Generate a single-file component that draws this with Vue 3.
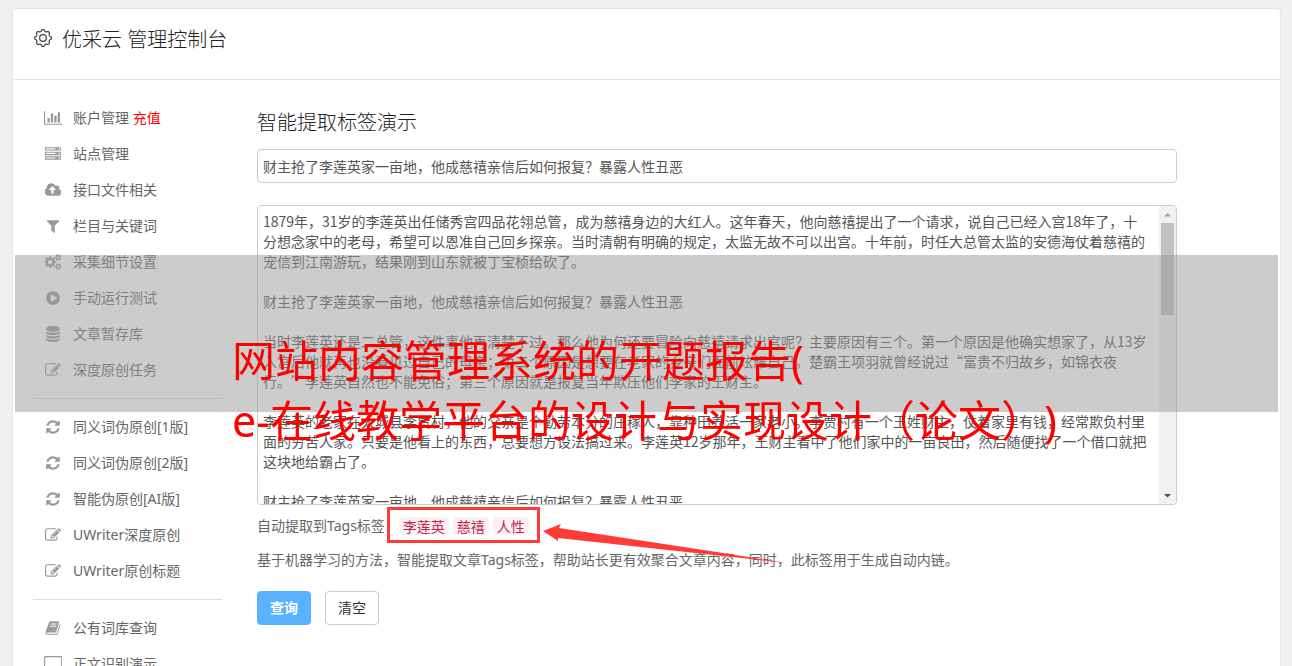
<script setup>
import { ref } from 'vue'

const icons = {
  chart: { w: 2048, d: 'M640 896v512h-256v-512h256zm384-512v1024h-256v-1024h256zm1024 1152v128h-2048v-1536h128v1408h1920zm-640-896v768h-256v-768h256zm384-384v1152h-256v-1152h256z' },
  server: { w: 1792, d: 'M128 1408h1024v-128h-1024v128zm0-512h1024v-128h-1024v128zm1568 448q0-40-28-68t-68-28-68 28-28 68 28 68 68 28 68-28 28-68zm-1568-960h1024v-128h-1024v128zm1568 448q0-40-28-68t-68-28-68 28-28 68 28 68 68 28 68-28 28-68zm0-512q0-40-28-68t-68-28-68 28-28 68 28 68 68 28 68-28 28-68zm96 832v384h-1792v-384h1792zm0-512v384h-1792v-384h1792zm0-512v384h-1792v-384h1792z' },
  upload: { w: 1856, d: 'M1216 864q0-14-9-23l-352-352q-9-9-23-9t-23 9l-351 351q-10 12-10 24 0 14 9 23t23 9h224v352q0 13 9.5 22.5t22.5 9.5h192q13 0 22.5-9.5t9.5-22.5v-352h224q13 0 22.5-9.5t9.5-22.5zm640 288q0 159-112.5 271.5t-271.5 112.5h-1088q-185 0-316.5-131.5t-131.5-316.5q0-130 70-240t188-165q-2-30-2-43 0-212 150-362t362-150q156 0 285.5 87t188.5 231q71-62 166-62 106 0 181 75t75 181q0 76-41 138 130 31 213.5 135.5t83.5 238.5z' },
  filter: { w: 1792, d: 'M1595 295q17 41-14 70l-493 493v742q0 42-39 59-13 5-25 5-27 0-45-19l-256-256q-19-19-19-45v-486l-493-493q-31-29-14-70 17-39 59-39h1280q42 0 59 39z' },
  cogs: { w: 1856, d: 'M832 896q0-106-75-181t-181-75-181 75-75 181 75 181 181 75 181-75 75-181zm768 512q0-52-38-90t-90-38-90 38-38 90q0 53 37.5 90.5t90.5 37.5 90.5-37.5 37.5-90.5zm0-1024q0-52-38-90t-90-38-90 38-38 90q0 53 37.5 90.5t90.5 37.5 90.5-37.5 37.5-90.5zm-384 421v185q0 10-7 19.5t-16 10.5l-155 24q-11 35-32 76 34 48 90 115 7 11 7 20 0 12-7 19-23 30-82.5 89.5t-78.5 59.5q-11 0-21-7l-115-90q-37 19-77 31-11 108-23 155-7 24-30 24h-186q-11 0-20-7.5t-10-17.5l-23-153q-34-10-75-31l-118 89q-7 7-20 7-11 0-21-8-144-133-144-160 0-9 7-19 10-14 41-53t47-61q-23-44-35-82l-152-24q-10-1-17-9.5t-7-19.5v-185q0-10 7-19.5t16-10.5l155-24q11-35 32-76-34-48-90-115-7-11-7-20 0-12 7-20 22-30 82-89t79-59q11 0 21 7l115 90q34-18 77-32 11-108 23-154 7-24 30-24h186q11 0 20 7.5t10 17.5l23 153q34 10 75 31l118-89q8-7 20-7 11 0 21 8 144 133 144 160 0 8-7 19-12 16-42 54t-45 60q23 48 34 82l152 23q10 2 17 10.5t7 19.5zm640 533v140q0 16-149 31-12 27-30 52 51 113 51 138 0 4-4 7-122 71-124 71-8 0-46-47t-52-68q-20 2-30 2t-30-2q-14 21-52 68t-46 47q-2 0-124-71-4-3-4-7 0-25 51-138-18-25-30-52-149-15-149-31v-140q0-16 149-31 13-29 30-52-51-113-51-138 0-4 4-7 4-2 35-20t59-34 30-16q8 0 46 46.5t52 67.5q20-2 30-2t30 2q51-71 92-112l6-2q4 0 124 70 4 3 4 7 0 25-51 138 17 23 30 52 149 15 149 31zm0-1024v140q0 16-149 31-12 27-30 52 51 113 51 138 0 4-4 7-122 71-124 71-8 0-46-47t-52-68q-20 2-30 2t-30-2q-14 21-52 68t-46 47q-2 0-124-71-4-3-4-7 0-25 51-138-18-25-30-52-149-15-149-31v-140q0-16 149-31 13-29 30-52-51-113-51-138 0-4 4-7 4-2 35-20t59-34 30-16q8 0 46 46.5t52 67.5q20-2 30-2t30 2q51-71 92-112l6-2q4 0 124 70 4 3 4 7 0 25-51 138 17 23 30 52 149 15 149 31z' },
  play: { w: 1792, d: 'M896 128q209 0 385.5 103t279.5 279.5 103 385.5-103 385.5-279.5 279.5-385.5 103-385.5-103-279.5-279.5-103-385.5 103-385.5 279.5-279.5 385.5-103zm384 823q32-18 32-55t-32-55l-544-320q-31-19-64-1-32 19-32 56v640q0 37 32 56 16 8 32 8 17 0 32-9z' },
  database: { w: 1792, d: 'M896 768q237 0 443-43t325-127v170q0 69-103 128t-280 93.5-385 34.5-385-34.5-280-93.5-103-128v-170q119 84 325 127t443 43zm0 768q237 0 443-43t325-127v170q0 69-103 128t-280 93.5-385 34.5-385-34.5-280-93.5-103-128v-170q119 84 325 127t443 43zm0-384q237 0 443-43t325-127v170q0 69-103 128t-280 93.5-385 34.5-385-34.5-280-93.5-103-128v-170q119 84 325 127t443 43zm0-1152q208 0 385 34.5t280 93.5 103 128v128q0 69-103 128t-280 93.5-385 34.5-385-34.5-280-93.5-103-128v-128q0-69 103-128t280-93.5 385-34.5z' },
  edit: { w: 1792, d: 'M888 1184l116-116-152-152-116 116v56h96v96h56zm440-720q-16-16-33 1l-350 350q-17 17-1 33t33-1l350-350q17-17 1-33zm80 594v190q0 119-84.5 203.5t-203.5 84.5h-832q-119 0-203.5-84.5t-84.5-203.5v-832q0-119 84.5-203.5t203.5-84.5h832q63 0 117 25 15 7 18 23 3 17-9 29l-49 49q-14 14-32 8-23-6-45-6h-832q-66 0-113 47t-47 113v832q0 66 47 113t113 47h832q66 0 113-47t47-113v-126q0-13 9-22l64-64q15-15 35-7t20 29zm-96-738l288 288-672 672h-288v-288zm444 132l-92 92-288-288 92-92q28-28 68-28t68 28l152 152q28 28 28 68t-28 68z' },
  refresh: { w: 1792, d: 'M1639 1056q0 5-1 7-64 268-268 434.5t-478 166.5q-146 0-282.5-55t-243.5-157l-129 129q-19 19-45 19t-45-19-19-45v-448q0-26 19-45t45-19h448q26 0 45 19t19 45-19 45l-137 137q71 66 161 102t187 36q134 0 250-65t186-179q11-17 53-117 8-23 30-23h192q13 0 22.5 9.5t9.5 22.5zm25-800v448q0 26-19 45t-45 19h-448q-26 0-45-19t-19-45 19-45l138-138q-148-137-349-137-134 0-250 65t-186 179q-11 17-53 117-8 23-30 23h-199q-13 0-22.5-9.5t-9.5-22.5v-7q65-268 270-434.5t480-166.5q146 0 284 55.5t245 156.5l130-129q19-19 45-19t45 19 19 45z' },
  book: { w: 1792, d: 'M1703 478q40 57 18 129l-275 906q-19 64-76.5 107.5t-122.5 43.5h-923q-77 0-148.5-53.5t-99.5-131.5q-24-67-2-127 0-4 3-27t4-37q1-8-3-21.5t-3-19.5q2-11 8-21t16.5-23.5 16.5-23.5q23-38 45-91.5t30-91.5q3-10 .5-30t-.5-28q3-11 17-28t17-23q21-36 42-92t25-90q1-9-2.5-32t.5-28q4-13 22-30.5t22-22.5q19-26 42.5-84.5t27.5-96.5q1-8-3-25.5t-2-26.5q2-8 9-18t18-23 17-21q8-12 16.5-30.5t15-35 16-36 19.5-32 26.5-23.5 36-11.5 47.5 5.5l-1 3q38-9 51-9h761q74 0 114 56t18 130l-274 906q-36 119-71.5 153.5t-128.5 34.5h-869q-27 0-38 15-11 16-1 43 24 70 144 70h923q29 0 56-15.5t35-41.5l300-987q7-22 5-57 38 15 59 43zm-1064 2q-4 13 2 22.5t20 9.5h608q13 0 25.5-9.5t16.5-22.5l21-64q4-13-2-22.5t-20-9.5h-608q-13 0-25.5 9.5t-16.5 22.5zm-83 256q-4 13 2 22.5t20 9.5h608q13 0 25.5-9.5t16.5-22.5l21-64q4-13-2-22.5t-20-9.5h-608q-13 0-25.5 9.5t-16.5 22.5z' },
  screen: { w: 2048, d: 'M160 0h1728q66 0 113 47t47 113v1088q0 66-47 113t-113 47h-1728q-66 0-113-47t-47-113v-1088q0-66 47-113t113-47zm0 128q-32 0-32 32v1088q0 32 32 32h1728q32 0 32-32v-1088q0-32-32-32zM640 1536h768v128h-768z' }
}

const groups = [
  [
    { icon: 'chart', text: '账户管理', extra: '充值' },
    { icon: 'server', text: '站点管理' },
    { icon: 'upload', text: '接口文件相关' },
    { icon: 'filter', text: '栏目与关键词' },
    { icon: 'cogs', text: '采集细节设置' },
    { icon: 'play', text: '手动运行测试' },
    { icon: 'database', text: '文章暂存库' },
    { icon: 'edit', text: '深度原创任务' }
  ],
  [
    { icon: 'refresh', text: '同义词伪原创[1版]' },
    { icon: 'refresh', text: '同义词伪原创[2版]' },
    { icon: 'refresh', text: '智能伪原创[AI版]' },
    { icon: 'edit', text: 'UWriter深度原创' },
    { icon: 'edit', text: 'UWriter原创标题' }
  ],
  [
    { icon: 'book', text: '公有词库查询' },
    { icon: 'screen', text: '正文识别演示' }
  ]
]

const headline = '财主抢了李莲英家一亩地，他成慈禧亲信后如何报复？暴露人性丑恶'
const title = ref(headline)
const body = ref([
  '1879年，31岁的李莲英出任储秀宫四品花翎总管，成为慈禧身边的大红人。这年春天，他向慈禧提出了一个请求，说自己已经入宫18年了，十分想念家中的老母，希望可以恩准自己回乡探亲。当时清朝有明确的规定，太监无故不可以出宫。十年前，时任大总管太监的安德海仗着慈禧的宠信到江南游玩，结果刚到山东就被丁宝桢给砍了。',
  headline,
  '当时李莲英还是二总管，这件事他再清楚不过。那么他为何还要冒险向慈禧请求出宫呢？主要原因有三个。第一个原因是他确实想家了，从13岁入宫后他就再也没看见过自己的母亲；第二个原因是想要在老家的乡亲们面前炫耀自己。楚霸王项羽就曾经说过“富贵不归故乡，如锦衣夜行。”李莲英自然也不能免俗；第三个原因就是报复当年欺压他们李家的王财主。',
  '李莲英的老家在大城县李贾村，他的父亲是个勤劳本分的庄稼人，靠种田养活一家老小。李贾村有一个王姓财主，仗着家里有钱，经常欺负村里面的穷苦人家。只要是他看上的东西，总要想方设法搞过来。李莲英12岁那年，王财主看中了他们家中的一亩良田，然后随便找了一个借口就把这块地给霸占了。',
  headline
].join('\n\n'))
const tags = ['李莲英', '慈禧', '人性']

const gear = Array.from({ length: 96 }, (_, i) => {
  const a = (i / 96) * Math.PI * 2
  const r = 7.6 + 0.8 * Math.tanh(2 * Math.cos(a * 8))
  return `${(9 + r * Math.cos(a)).toFixed(2)},${(9 + r * Math.sin(a)).toFixed(2)}`
}).join(' ')

function clearAll() {
  title.value = ''
  body.value = ''
}
</script>

<template>
  <div class="page" lang="zh-CN">
    <div class="panel">
      <header class="head">
        <svg class="gear" viewBox="0 0 18 18" aria-hidden="true">
          <polygon :points="gear" />
          <circle cx="9" cy="9" r="3.4" />
        </svg>
        <h1>优采云 管理控制台</h1>
      </header>
      <div class="content">
        <nav class="side">
          <ul v-for="(group, g) in groups" :key="g">
            <li v-for="item in group" :key="item.text">
              <a href="#">
                <span class="ico">
                  <svg :viewBox="`0 0 ${icons[item.icon].w} 1792`" aria-hidden="true">
                    <path :d="icons[item.icon].d" fill-rule="evenodd" />
                  </svg>
                </span>
                <span>{{ item.text }} <b v-if="item.extra">{{ item.extra }}</b></span>
              </a>
            </li>
          </ul>
        </nav>
        <main class="main">
          <h2>智能提取标签演示</h2>
          <input v-model="title" class="field" type="text" aria-label="标题" />
          <div class="editor">
            <textarea v-model="body" aria-label="正文" spellcheck="false"></textarea>
            <div class="bar" aria-hidden="true">
              <svg viewBox="0 0 17 17"><path d="M5 10.500h7L8.500 7z" fill="#a3a3a3" /></svg>
              <i class="thumb"></i>
              <svg viewBox="0 0 17 17"><path d="M5 7h7l-3.500 3.500z" fill="#505050" /></svg>
            </div>
          </div>
          <p class="result">
            <span>自动提取到Tags标签：</span>
            <span class="tags">
              <code v-for="t in tags" :key="t">{{ t }}</code>
              <svg class="arrow" viewBox="0 0 244 40" aria-hidden="true">
                <path d="M0 7L18 0L16 4L180 29L244 39L180 32L15 14L15 17Z" fill="#ff3b38" />
              </svg>
            </span>
          </p>
          <p class="note">基于机器学习的方法，智能提取文章Tags标签，帮助站长更有效聚合文章内容，同时，此标签用于生成自动内链。</p>
          <div class="actions">
            <button class="primary" type="button">查询</button>
            <button type="button" @click="clearAll">清空</button>
          </div>
        </main>
      </div>
    </div>
    <div class="caption">网站内容管理系统的开题报告(<br />e-在线教学平台的设计与实现设计（论文）)</div>
  </div>
</template>

<style>
body {
  margin: 0;
  background: #f0f0f0;
}
</style>

<style scoped>
* {
  box-sizing: border-box;
}
.page {
  position: relative;
  height: 100vh;
  overflow: hidden;
  padding: 8px 11px 0 12px;
  font: 14px/20px "Noto Sans", "Noto Sans CJK SC", sans-serif;
  color: #555;
  text-spacing-trim: space-all;
}
.panel {
  background: #fff;
  border: 1px solid #e5e5e5;
  border-radius: 4px;
}
.head {
  display: flex;
  align-items: center;
  gap: 10px;
  height: 71px;
  padding: 0 20px 12px 21px;
  border-bottom: 1px solid #e5e5e5;
}
.gear {
  width: 18px;
  height: 18px;
  fill: none;
  stroke: #444;
  stroke-width: 1.2;
}
h1,
h2 {
  margin: 0;
  font-size: 20px;
  line-height: 24px;
  font-weight: 300;
  color: #222;
  font-family: "Noto Sans", "Noto Sans CJK SC", sans-serif;
}
h1 {
  padding-top: 4px;
}
.content {
  display: flex;
  gap: 35px;
  padding: 20px 103px 0 20px;
}
.side {
  flex: none;
  width: 189px;
}
ul {
  list-style: none;
  margin: 0;
  padding: 0;
}
ul + ul {
  margin-top: 10px;
  padding-top: 10px;
  border-top: 1px solid #ddd;
}
.side a {
  display: flex;
  align-items: center;
  gap: 10px;
  height: 36px;
  padding-left: 10px;
  color: #666;
  text-decoration: none;
}
.side b {
  font-weight: 400;
  color: #f00;
}
.ico {
  display: flex;
  justify-content: center;
  width: 20px;
}
.ico svg {
  display: block;
  height: 16px;
  fill: #999;
}
.main {
  flex: 1;
  min-width: 0;
  padding-top: 11px;
}
.field {
  display: block;
  width: 100%;
  height: 34px;
  margin-top: 14px;
  padding: 0 5px;
  border: 1px solid #ccc;
  border-radius: 4px;
  background: #fff;
  color: #555;
  font: inherit;
}
.editor {
  display: flex;
  height: 300px;
  margin-top: 22px;
  border: 1px solid #ccc;
  border-radius: 4px;
  overflow: hidden;
}
textarea {
  flex: 1;
  min-width: 0;
  padding: 5px 9px 0 5px;
  border: 0;
  outline: 0;
  resize: none;
  color: #555;
  font: 14px/20px "Noto Sans CJK SC", sans-serif;
  text-spacing-trim: space-all;
  scrollbar-width: none;
}
.bar {
  display: flex;
  flex-direction: column;
  width: 17px;
  background: #f1f1f1;
}
.bar svg {
  width: 17px;
  height: 17px;
}
.thumb {
  height: 92px;
  margin: 0 2px auto;
  background: #c1c1c1;
}
.result,
.note {
  display: flex;
  margin: 11px 0 0;
  color: #666;
}
.note {
  margin-top: 14px;
}
.tags {
  position: relative;
  display: flex;
  align-items: center;
  gap: 4px;
}
.tags::before {
  content: "";
  position: absolute;
  inset: -9px -11px -7px -12px;
  border: 3px solid #ff3b38;
}
code {
  padding: 0 4px;
  border-radius: 4px;
  background: #f9f2f4;
  color: #c7254e;
  font: 14px/18px "Noto Sans CJK SC", sans-serif;
}
.arrow {
  position: absolute;
  left: 144px;
  top: 8px;
  width: 244px;
  height: 40px;
}
.actions {
  display: flex;
  gap: 14px;
  margin-top: 21px;
}
button {
  height: 34px;
  padding: 0 12px;
  border: 1px solid #ccc;
  border-radius: 4px;
  background: #fff;
  color: #333;
  font: inherit;
}
.primary {
  border-color: #5ab1ff;
  background: #5ab1ff;
  color: #fff;
  font-weight: 700;
}
.caption {
  position: absolute;
  left: 15px;
  right: 14px;
  top: 255px;
  height: 157px;
  padding: 76px 0 0 217px;
  background: rgba(153, 153, 153, 0.5);
  color: #f00;
  font-size: 43px;
  line-height: 60px;
  white-space: nowrap;
  pointer-events: none;
}
</style>
